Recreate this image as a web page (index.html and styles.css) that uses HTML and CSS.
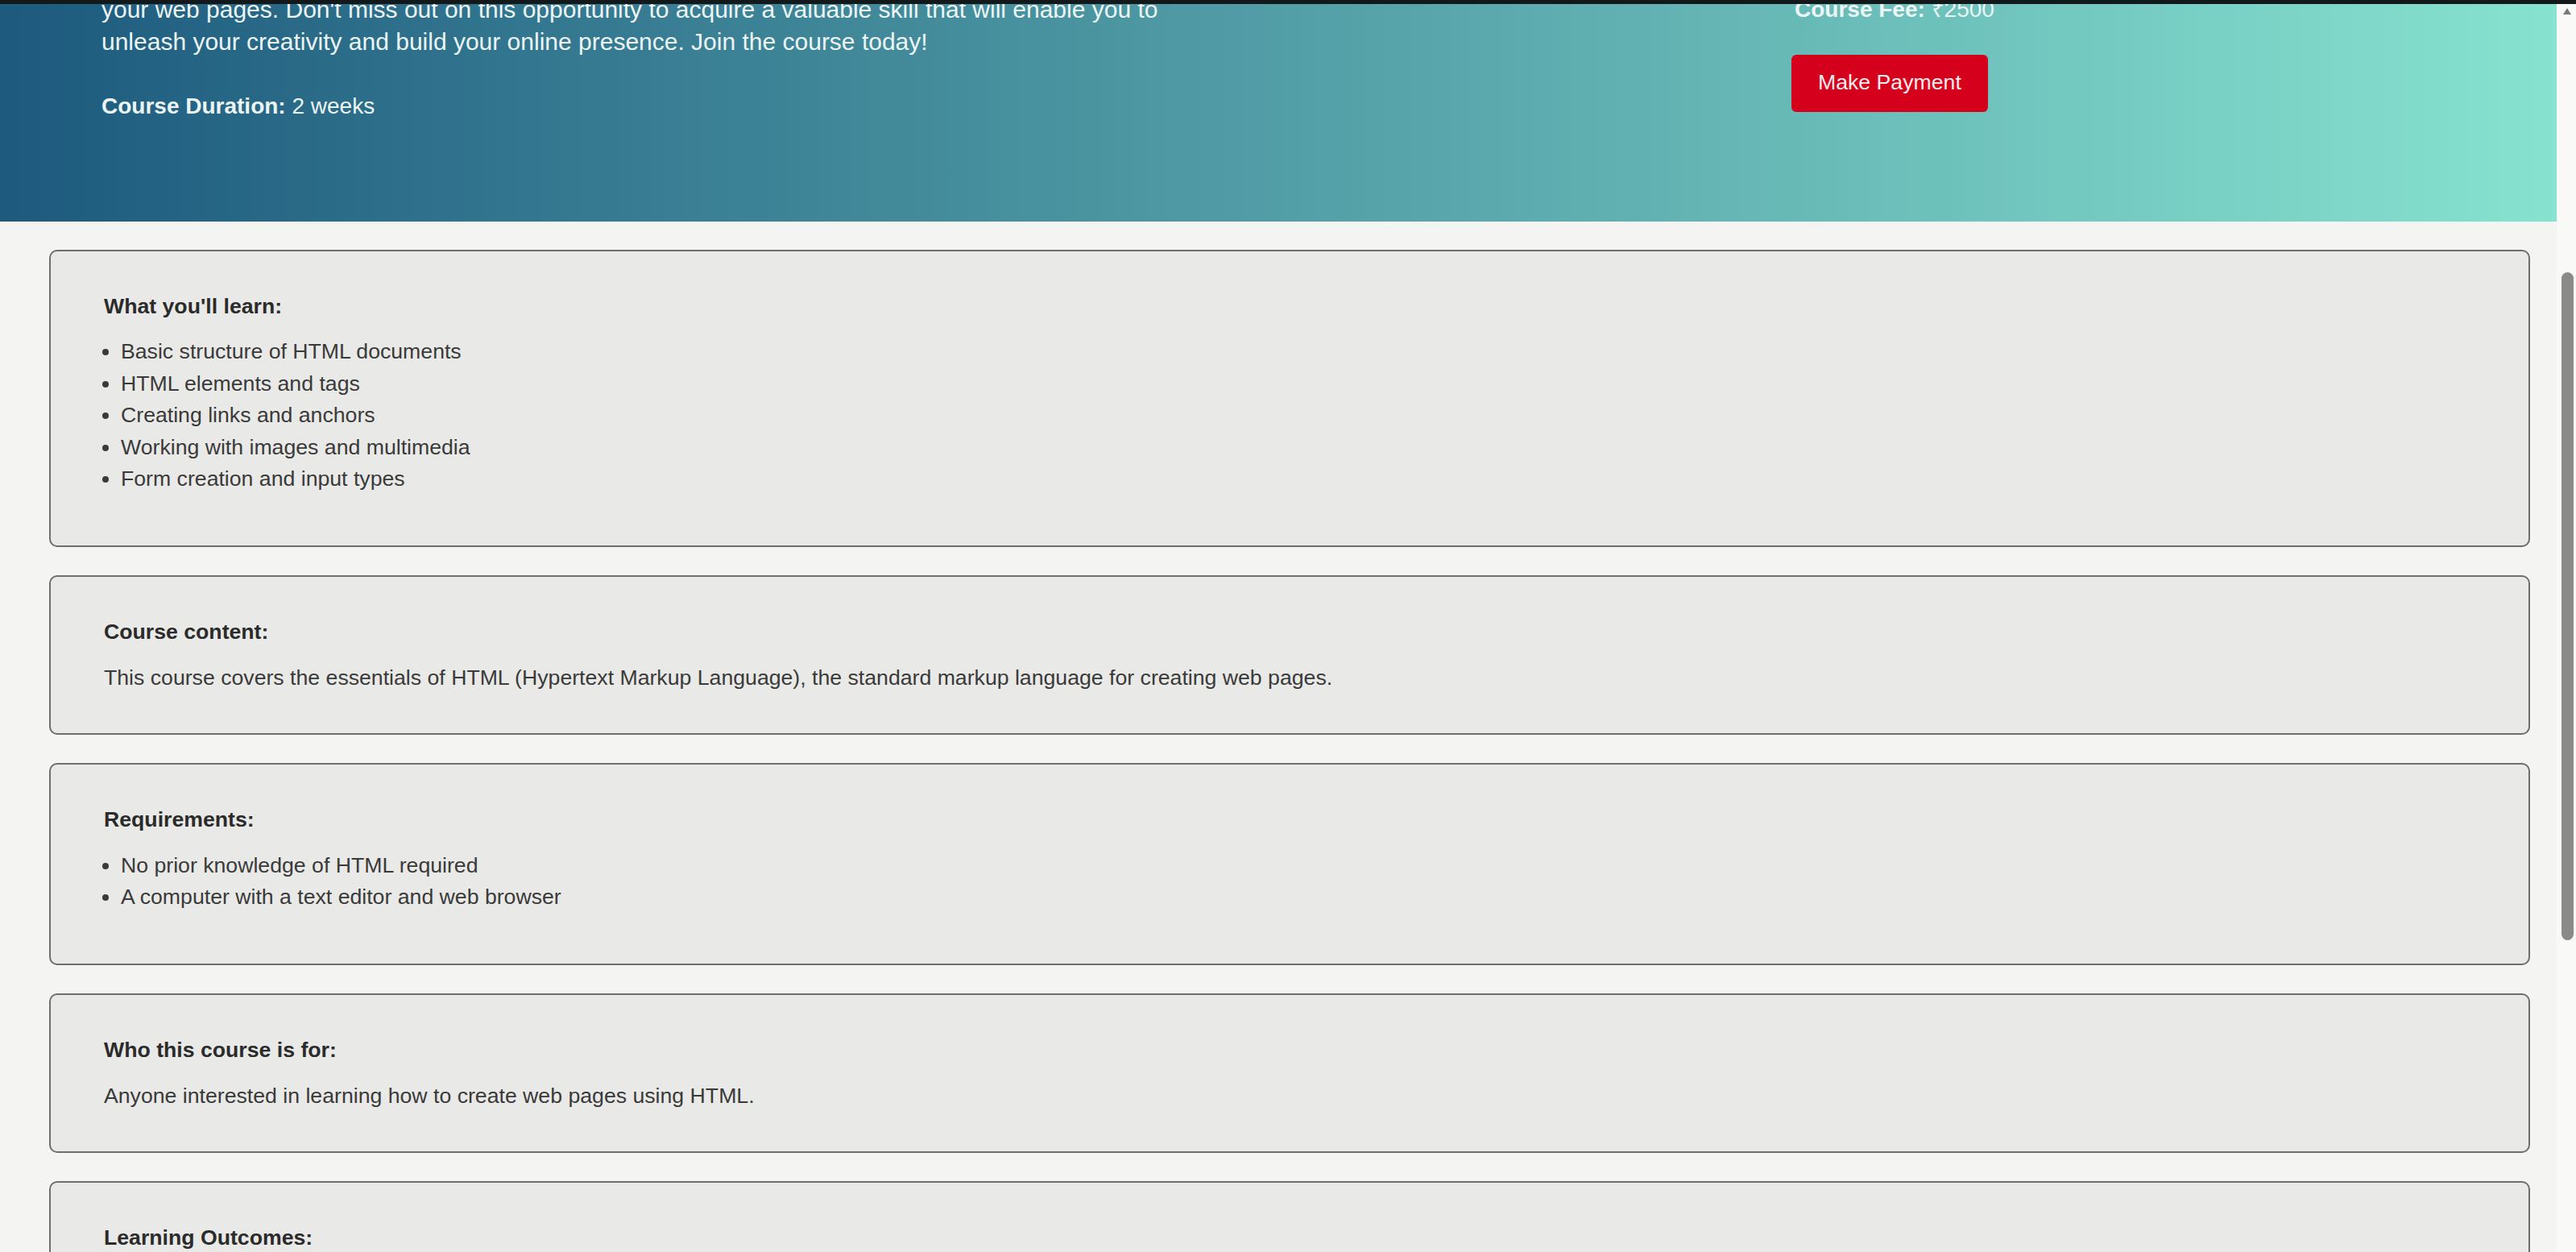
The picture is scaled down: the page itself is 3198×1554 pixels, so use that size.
FILE: index.html
```html
<!DOCTYPE html>
<html lang="en">
<head>
    <meta charset="UTF-8">
    <meta name="viewport" content="width=device-width, initial-scale=1.0">
    <title>HTML Basics - Course</title>
    <link rel="stylesheet" href="styles.css">
</head>
<body>
    <div class="window-edge"></div>

    <div class="scrollbar">
        <span class="scroll-arrow"></span>
        <div class="scroll-thumb" style="top: 338px; height: 829px;"></div>
    </div>

    <header class="hero">
        <div class="hero-left">
            <p class="hero-desc">your web pages. Don't miss out on this opportunity to acquire a valuable skill that will enable you to unleash your creativity and build your online presence. Join the course today!</p>
            <p class="hero-meta"><strong>Course Duration:</strong> 2 weeks</p>
        </div>
        <div class="hero-right">
            <p class="hero-meta fee"><strong>Course Fee:</strong> ₹2500</p>
            <button class="pay-btn">Make Payment</button>
        </div>
    </header>

    <main class="sections">
        <section class="info-card">
            <h4>What you'll learn:</h4>
            <ul>
                <li>Basic structure of HTML documents</li>
                <li>HTML elements and tags</li>
                <li>Creating links and anchors</li>
                <li>Working with images and multimedia</li>
                <li>Form creation and input types</li>
            </ul>
        </section>

        <section class="info-card">
            <h4>Course content:</h4>
            <p>This course covers the essentials of HTML (Hypertext Markup Language), the standard markup language for creating web pages.</p>
        </section>

        <section class="info-card">
            <h4>Requirements:</h4>
            <ul>
                <li>No prior knowledge of HTML required</li>
                <li>A computer with a text editor and web browser</li>
            </ul>
        </section>

        <section class="info-card">
            <h4>Who this course is for:</h4>
            <p>Anyone interested in learning how to create web pages using HTML.</p>
        </section>

        <section class="info-card">
            <h4>Learning Outcomes:</h4>
            <ul>
                <li>Build well-structured web pages with HTML</li>
                <li>Use links, images and forms in your pages</li>
            </ul>
        </section>
    </main>

    <script>
        window.scrollTo(0, 40);
    </script>
</body>
</html>
```

FILE: styles.css
```css
* {
    margin: 0;
    padding: 0;
    box-sizing: border-box;
}

html {
    overflow: hidden;
}

body {
    font-family: 'Liberation Sans', Arial, sans-serif;
    background-color: #f4f4f2;
    color: #3a3a3a;
    padding-right: 24px;
}

.window-edge {
    position: fixed;
    top: 0;
    left: 0;
    right: 0;
    height: 5px;
    background: #13181a;
    z-index: 20;
}

.scrollbar {
    position: fixed;
    top: 0;
    right: 0;
    bottom: 0;
    width: 24px;
    background: #f9f9f8;
    z-index: 10;
}

.scroll-thumb {
    position: absolute;
    left: 6px;
    width: 15px;
    background: #8a8a8a;
    border-radius: 8px;
}

.scroll-arrow {
    position: absolute;
    top: 10px;
    left: 8px;
    width: 0;
    height: 0;
    border-left: 5px solid transparent;
    border-right: 5px solid transparent;
    border-bottom: 8px solid #7a7a7a;
}

.hero {
    display: grid;
    grid-template-columns: 2098px auto;
    padding: 32px 0 123px 126px;
    background: linear-gradient(to right, #1d5a7e, #87e2cf);
    color: #ecf5f5;
}

.hero-desc {
    max-width: 1400px;
    font-size: 30px;
    line-height: 40px;
    margin-bottom: 40px;
}

.hero-meta {
    font-size: 28px;
    line-height: 40px;
}

.fee {
    padding-left: 4px;
    margin-bottom: 36px;
}

.pay-btn {
    background: #d5001c;
    color: #ffecef;
    border: none;
    border-radius: 6px;
    font-family: 'Liberation Sans', Arial, sans-serif;
    font-size: 26.67px;
    line-height: 31px;
    padding: 19px 33px 21px;
    cursor: pointer;
}

.sections {
    padding: 35px 33px 0 61px;
}

.info-card {
    background: #e9e9e7;
    border: 2px solid #6e6e6e;
    border-radius: 10px;
    padding: 49px 66px;
    margin-bottom: 35px;
    font-size: 26.67px;
    line-height: 39.4px;
}

.info-card h4 {
    font-size: inherit;
    color: #2b2b2b;
    margin-bottom: 17px;
}

.info-card ul {
    padding-left: 21px;
    margin-bottom: 14px;
}
```
